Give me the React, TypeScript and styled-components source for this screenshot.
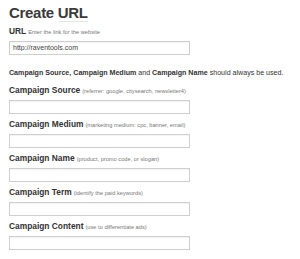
import styled, { createGlobalStyle } from 'styled-components'

const GlobalStyle = createGlobalStyle`
  html, body {
    margin: 0;
    padding: 0;
    background: #fff;
  }
  body {
    font-family: "Liberation Sans", Arial, Helvetica, sans-serif;
    color: #333;
  }
`

const Page = styled.div`
  padding: 4px 0 0 9px;
  width: 291px;
`

const Title = styled.h1`
  margin: 0;
  font-size: 15px;
  line-height: 18px;
  font-weight: bold;
  letter-spacing: -0.3px;
  color: #3a3a3a;
`

const Abbr = styled.span`
  border-bottom: 1px solid #e6e6e6;
`

const Field = styled.div<{ $first?: boolean }>`
  display: flex;
  flex-direction: column;
  margin-top: ${p => (p.$first ? '4px' : '5.5px')};
`

const Label = styled.label`
  font-size: 8.4px;
  line-height: 10px;
  font-weight: bold;
  color: #333;
  white-space: nowrap;
`

const Hint = styled.span`
  font-size: 5.7px;
  font-weight: normal;
  color: #777;
  margin-left: 2px;
`

const Input = styled.input`
  box-sizing: border-box;
  margin-top: 3.5px;
  width: 181px;
  height: 14px;
  padding: 0 3px;
  border: 1px solid #cfcfcf;
  border-radius: 0;
  background: #fff;
  box-shadow: inset 0 1px 1px rgba(0, 0, 0, 0.05);
  font-family: "Liberation Sans", Arial, sans-serif;
  font-size: 7px;
  color: #444;
  outline: none;
`

const Notice = styled.p`
  margin: 14px 0 0;
  font-size: 7.1px;
  line-height: 9px;
  color: #333;
  white-space: nowrap;
  & + div {
    margin-top: 7.5px;
  }
`

const Rule = styled.hr`
  margin: 11px 0 0;
  border: 0;
  border-top: 1px solid #e8e8e8;
  height: 0;
`

const campaignFields = [
  { name: 'Campaign Source', hint: '(referrer: google, citysearch, newsletter4)' },
  { name: 'Campaign Medium', hint: '(marketing medium: cpc, banner, email)' },
  { name: 'Campaign Name', hint: '(product, promo code, or slogan)' },
  { name: 'Campaign Term', hint: '(identify the paid keywords)' },
  { name: 'Campaign Content', hint: '(use to differentiate ads)' },
]

const App = () => {
  return (
    <>
      <GlobalStyle />
      <Page>
        <Title>
          Create <Abbr>URL</Abbr>
        </Title>
        <Field $first>
          <Label>
            URL<Hint>Enter the link for the website</Hint>
          </Label>
          <Input defaultValue="http://raventools.com" />
        </Field>
        <Notice>
          <b>Campaign Source, Campaign Medium</b> and <b>Campaign Name</b> should always be used.
        </Notice>
        {campaignFields.map(f => (
          <Field key={f.name}>
            <Label>
              {f.name}
              <Hint>{f.hint}</Hint>
            </Label>
            <Input />
          </Field>
        ))}
        <Rule />
      </Page>
    </>
  )
}

export default App
